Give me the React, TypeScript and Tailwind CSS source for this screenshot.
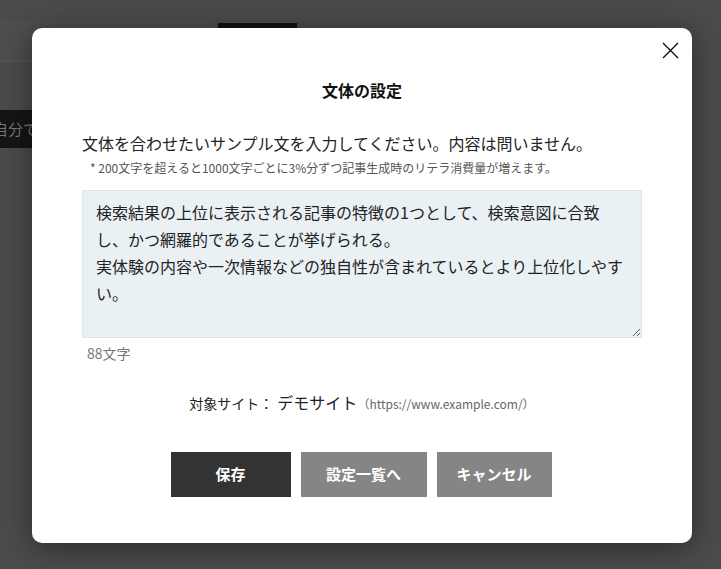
import { useState } from "react";

const sample =
	"検索結果の上位に表示される記事の特徴の1つとして、検索意図に合致し、かつ網羅的であることが挙げられる。\n実体験の内容や一次情報などの独自性が含まれているとより上位化しやすい。";

export default function App() {
	const [text, setText] = useState(sample);

	return (
		<div
			className="relative h-[569px] w-full overflow-hidden bg-[#4b4b4b]"
			style={{ fontFamily: '"Noto Sans CJK JP", "Noto Sans", sans-serif' }}
		>
			{/* dimmed page underneath */}
			<div className="pt-[20px]">
				<div className="flex items-start">
					<div className="h-[42px] w-[210px] border-b border-[#555] bg-[#4e4e4e]" />
					<div className="ml-[8px] mt-[3px] h-[40px] w-[79px] bg-[#111]" />
				</div>
				<div className="mt-[47px] flex h-[38px] w-[60px] items-center bg-[#151515] text-[15px] text-[#777]">
					<span className="-ml-[7px]">自分で</span>
				</div>
			</div>

			{/* modal */}
			<div className="absolute inset-0 flex justify-center pt-[28px]">
				<div className="relative ml-[3px] h-[515px] w-[660px] rounded-[10px] bg-white shadow-[0_4px_30px_rgba(0,0,0,0.45)]">
					<button className="absolute right-[12px] top-[12px] flex h-[20px] w-[20px] items-center justify-center text-[#111]">
						<svg width="17" height="17" viewBox="0 0 17 17" fill="none">
							<path d="M1 1L16 16M16 1L1 16" stroke="#111" strokeWidth="1.4" />
						</svg>
					</button>

					<h2 className="pt-[49px] text-center text-[16px] font-bold leading-[26px] text-[#111]">
						文体の設定
					</h2>

					<div className="px-[50px] pt-[28px]">
						<p className="text-[16px] leading-[24px] text-[#222]">
							文体を合わせたいサンプル文を入力してください。内容は問いません。
						</p>
						<p className="mt-[4px] pl-[8px] text-[12px] leading-[18px] text-[#555]">
							* 200文字を超えると1000文字ごとに3%分ずつ記事生成時のリテラ消費量が増えます。
						</p>

						<textarea
							value={text}
							onChange={(e) => setText(e.target.value)}
							className="mt-[13px] block h-[148px] w-full resize-y border border-[#dde7eb] bg-[#eaf1f4] px-[13px] pt-[8px] text-[16px] leading-[27px] text-[#222] outline-none"
						/>
						<p className="pl-[5px] pt-[5px] text-[14px] leading-[20px] text-[#777]">
							88文字
						</p>

						<div className="mt-[27px] flex items-baseline justify-center text-[#222]">
							<span className="text-[14px]">対象サイト：</span>
							<span className="ml-[4px] text-[16px]">デモサイト</span>
							<span className="text-[12px] text-[#666]">（https://www.example.com/）</span>
						</div>

						<div className="mr-[2px] mt-[38px] flex justify-center gap-[10px]">
							<button className="h-[45px] w-[120px] bg-[#333] text-[15px] font-bold text-white">
								保存
							</button>
							<button className="h-[45px] w-[126px] bg-[#858585] text-[15px] font-bold text-white">
								設定一覧へ
							</button>
							<button className="h-[45px] w-[115px] bg-[#858585] text-[15px] font-bold text-white">
								キャンセル
							</button>
						</div>
					</div>
				</div>
			</div>
		</div>
	);
}
